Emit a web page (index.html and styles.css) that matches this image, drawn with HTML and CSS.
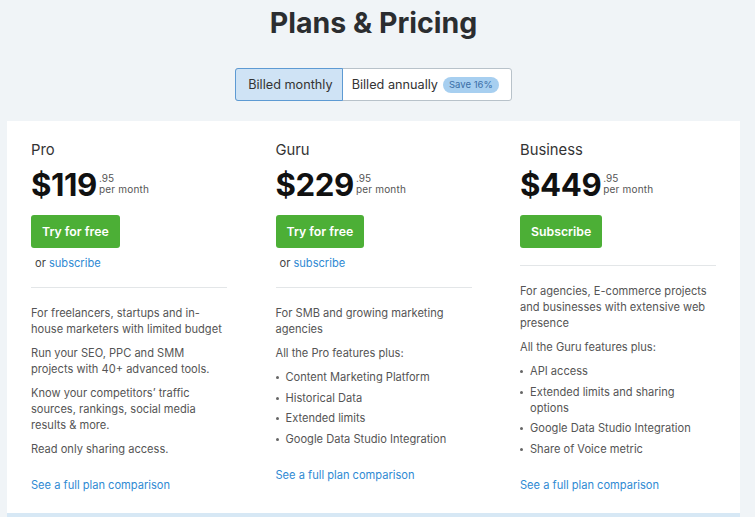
FILE: index.html
```html
<!DOCTYPE html>
<html>
<head>
<meta charset="utf-8">
<link rel="stylesheet" href="styles.css">
</head>
<body>
<div class="page">
  <h1 class="title">Plans &amp; Pricing</h1>
  <div class="toggle-wrap">
    <div class="toggle">
      <div class="seg seg-active">Billed monthly</div>
      <div class="seg">Billed annually<span class="badge">Save 16%</span></div>
    </div>
  </div>
  <div class="card">
    <div class="plan">
      <div class="name">Pro</div>
      <div class="price"><span class="amount">$119</span><span class="meta"><span class="cents">.95</span><span class="per">per month</span></span></div>
      <div class="btn">Try for free</div>
      <div class="alt">or <span class="link">subscribe</span></div>
      <div class="divider"></div>
      <p class="txt">For freelancers, startups and in-house marketers with limited budget</p>
      <p class="txt">Run your SEO, PPC and SMM projects with 40+ advanced tools.</p>
      <p class="txt">Know your competitors’ traffic sources, rankings, social media results &amp; more.</p>
      <p class="txt">Read only sharing access.</p>
      <div class="compare link">See a full plan comparison</div>
    </div>
    <div class="plan">
      <div class="name">Guru</div>
      <div class="price"><span class="amount">$229</span><span class="meta"><span class="cents">.95</span><span class="per">per month</span></span></div>
      <div class="btn">Try for free</div>
      <div class="alt">or <span class="link">subscribe</span></div>
      <div class="divider"></div>
      <p class="txt">For SMB and growing marketing agencies</p>
      <p class="txt">All the Pro features plus:</p>
      <ul class="list">
        <li>Content Marketing Platform</li>
        <li>Historical Data</li>
        <li>Extended limits</li>
        <li>Google Data Studio Integration</li>
      </ul>
      <div class="compare link">See a full plan comparison</div>
    </div>
    <div class="plan">
      <div class="name">Business</div>
      <div class="price"><span class="amount">$449</span><span class="meta"><span class="cents">.95</span><span class="per">per month</span></span></div>
      <div class="btn">Subscribe</div>
      <div class="divider divider-tight"></div>
      <p class="txt">For agencies, E-commerce projects and businesses with extensive web presence</p>
      <p class="txt">All the Guru features plus:</p>
      <ul class="list">
        <li>API access</li>
        <li>Extended limits and sharing options</li>
        <li>Google Data Studio Integration</li>
        <li>Share of Voice metric</li>
      </ul>
      <div class="compare link">See a full plan comparison</div>
    </div>
  </div>
  <div class="strip"></div>
</div>
</body>
</html>
```

FILE: styles.css
```css
html, body {
  margin: 0;
  padding: 0;
  background: #f0f4f7;
  font-family: Inter, "Noto Sans", sans-serif;
  color: #333;
}
.page {
  width: 733px;
  margin-left: 7px;
}
.title {
  margin: 0;
  padding-top: 6px;
  height: 62px;
  text-align: center;
  font-size: 28.5px;
  line-height: 34px;
  font-weight: 700;
  color: #2b2d30;
}
.toggle-wrap {
  display: flex;
  justify-content: center;
}
.toggle {
  display: flex;
  border: 1px solid #b8c2ca;
  border-radius: 3px;
  background: #fff;
  height: 31px;
}
.seg {
  display: flex;
  align-items: center;
  padding: 0 12px 0 9px;
  font-size: 12.7px;
  color: #333;
}
.seg-active {
  background: #cfe3f5;
  border: 1px solid #5d9ad3;
  margin: -1px 0 -1px -1px;
  border-radius: 3px 0 0 3px;
  padding: 0 9px 0 12px;
}
.badge {
  margin-left: 5px;
  background: #a7cff0;
  color: #3a6ea6;
  font-size: 9.5px;
  line-height: 16px;
  padding: 0 6px;
  border-radius: 8px;
}
.card {
  margin-top: 20px;
  background: #fff;
  padding: 19px 24px 20px;
  display: grid;
  grid-template-columns: 196px 196px 196px;
  column-gap: 48.5px;
  align-items: start;
}
.name {
  font-size: 14.8px;
  line-height: 20px;
  color: #333;
}
.price {
  display: flex;
  align-items: flex-start;
  margin-top: 7px;
  height: 34px;
}
.amount {
  font-size: 31.2px;
  line-height: 36px;
  font-weight: 700;
  color: #111;
  letter-spacing: -0.4px;
}
.meta {
  display: flex;
  flex-direction: column;
  margin-left: 2px;
  margin-top: 6px;
  font-size: 10px;
  line-height: 11px;
  color: #555;
}
.per {
  letter-spacing: 0.2px;
}
.btn {
  display: inline-block;
  margin-top: 14px;
  height: 33px;
  line-height: 33px;
  padding: 0 11px;
  background: #4caf36;
  color: #fff;
  border-radius: 3px;
  font-size: 12.3px;
  font-weight: 600;
}
.alt {
  margin-top: 7px;
  padding-left: 4px;
  font-size: 11.1px;
  line-height: 16px;
  color: #444;
}
.link {
  color: #2f8ad3;
}
.divider {
  margin-top: 16px;
  border-top: 1px solid #e3e6e8;
}
.divider-tight {
  margin-top: 17px;
}
.txt {
  margin: 17px 0 0;
  font-size: 11.1px;
  line-height: 16px;
  color: #555;
}
.txt + .txt {
  margin-top: 8px;
}
.list {
  margin: 8px 0 0;
  padding: 0;
  list-style: none;
}
.list li {
  position: relative;
  padding-left: 10px;
  font-size: 11.1px;
  line-height: 16px;
  color: #555;
  margin-bottom: 4.5px;
}
.list li::before {
  content: "";
  position: absolute;
  left: 0;
  top: 7px;
  width: 3px;
  height: 3px;
  border-radius: 50%;
  background: #666;
}
.compare {
  margin-top: 20px;
  font-size: 11.1px;
  line-height: 16px;
}
.list + .compare {
  margin-top: 20px;
}
.strip {
  height: 10px;
  background: #d7e8f5;
}
```
